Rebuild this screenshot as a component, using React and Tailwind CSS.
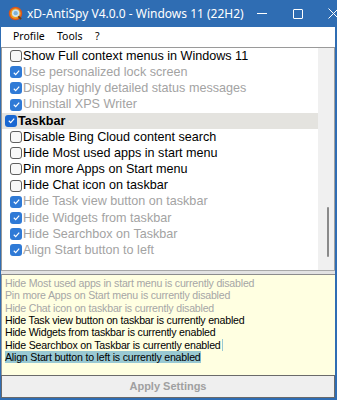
import React from "react";

const rows = [
  { t: "Show Full context menus in Windows 11", c: false, d: false },
  { t: "Use personalized lock screen", c: true, d: true },
  { t: "Display highly detailed status messages", c: true, d: true },
  { t: "Uninstall XPS Writer", c: true, d: true },
  { t: "Taskbar", c: true, d: false, h: true },
  { t: "Disable Bing Cloud content search", c: false, d: false },
  { t: "Hide Most used apps in start menu", c: false, d: false },
  { t: "Pin more Apps on Start menu", c: false, d: false },
  { t: "Hide Chat icon on taskbar", c: false, d: false },
  { t: "Hide Task view button on taskbar", c: true, d: true },
  { t: "Hide Widgets from taskbar", c: true, d: true },
  { t: "Hide Searchbox on Taskbar", c: true, d: true },
  { t: "Align Start button to left", c: true, d: true },
];

const logs = [
  { t: "Hide Most used apps in start menu is currently disabled", d: true },
  { t: "Pin more Apps on Start menu is currently disabled", d: true },
  { t: "Hide Chat icon on taskbar is currently disabled", d: true },
  { t: "Hide Task view button on taskbar is currently enabled", d: false },
  { t: "Hide Widgets from taskbar is currently enabled", d: false },
  { t: "Hide Searchbox on Taskbar is currently enabled", d: false, caret: true },
  { t: "Align Start button to left is currently enabled", d: false, sel: true },
];

function Box({ checked, dim }) {
  if (!checked)
    return (
      <span className="w-[12px] h-[12px] rounded-[3px] border border-[#5f5f5f] bg-[#f8f8f8] shrink-0" />
    );
  return (
    <span
      className={`w-[12px] h-[12px] rounded-[3px] shrink-0 flex items-center justify-center ${
        dim ? "bg-[#2f7ad6]" : "bg-[#1967d2]"
      }`}
    >
      <svg width="9" height="9" viewBox="0 0 10 10">
        <path d="M2 5.3 L4.1 7.3 L8 2.8" fill="none" stroke="white" strokeWidth="1.3" />
      </svg>
    </span>
  );
}

function Logo() {
  return (
    <svg width="15" height="15" viewBox="0 0 16 16">
      <circle cx="8" cy="8" r="7.2" fill="#d9561e" />
      <circle cx="8" cy="8" r="5.6" fill="#f0a020" />
      <circle cx="8.2" cy="7.6" r="4" fill="#cfe6f2" />
      <circle cx="8.2" cy="7.6" r="2.3" fill="#7fb2d6" />
      <path d="M11 11 L14 14" stroke="#6b3a1a" strokeWidth="2" />
    </svg>
  );
}

export default function App() {
  return (
    <div
      className="w-[337px] h-[400px] bg-[#2f6db3] flex flex-col pl-px pr-[2px] pb-[2px] overflow-hidden"
      style={{ fontFamily: '"Liberation Sans", Arial, sans-serif' }}
    >
      {/* title bar */}
      <div className="h-[27px] flex items-center text-white shrink-0">
        <div className="pl-[7px] pr-[4px] flex items-center">
          <Logo />
        </div>
        <div
          className="text-[12px] flex-1 whitespace-nowrap"
          style={{ fontFamily: '"Noto Sans", sans-serif' }}
        >
          xD-AntiSpy V4.0.0 - Windows 11 (22H2)
        </div>
        <div className="flex items-center">
          <div className="w-[36px] flex justify-center">
            <div className="w-[10px] h-px bg-white" />
          </div>
          <div className="w-[36px] flex justify-center">
            <div className="w-[10px] h-[10px] border border-white rounded-[1px]" />
          </div>
          <div className="w-[36px] flex justify-center">
            <svg width="11" height="11" viewBox="0 0 11 11">
              <path d="M0.5 0.5 L10.5 10.5 M10.5 0.5 L0.5 10.5" stroke="white" strokeWidth="1" />
            </svg>
          </div>
        </div>
      </div>

      {/* menu bar */}
      <div
        className="h-[20px] bg-white flex items-center text-[10.5px] text-black shrink-0 pl-[12px]"
        style={{ fontFamily: '"Noto Sans", sans-serif' }}
      >
        <span className="w-[44px]">Profile</span>
        <span className="w-[38px]">Tools</span>
        <span>?</span>
      </div>

      {/* list */}
      <div className="h-[224px] bg-white border-t border-l border-[#9a9a9a] flex shrink-0 border-b border-b-[#a8a8a8]">
        <div className="flex-1 flex flex-col overflow-hidden">
          {rows.map((r, i) => (
            <div
              key={i}
              className={`h-[16.2px] flex items-center whitespace-nowrap text-[12.6px] leading-none ${
                r.h ? "bg-[#e4e3df] pl-[3px] gap-[1px] font-bold text-black" : "pl-[8px] gap-[1px]"
              } ${r.d ? "text-[#a3a3a3]" : "text-black"}`}
            >
              <Box checked={r.c} dim={r.d} />
              <span>{r.t}</span>
            </div>
          ))}
        </div>
        <div className="w-[16px] bg-[#f0f0f0] flex flex-col items-center relative">
          <div className="absolute left-[9px] top-[159px] w-[2px] h-[50px] rounded-full bg-[#8a8a8a]" />
        </div>
        <div className="w-px bg-[#a0a0a0]" />
      </div>

      {/* separator */}
      <div className="h-[3px] bg-[#e2e2e2] shrink-0" />

      {/* log */}
      <div className="flex-1 bg-[#ffffe1] border-t border-[#8c8c8c] border-l border-l-[#9a9a9a] pt-[2px] pl-[3px] text-[10.6px] tracking-[-0.2px] leading-[12.33px]">
        {logs.map((l, i) => (
          <div key={i} className="flex whitespace-nowrap">
            <span
              className={`${l.d ? "text-[#a6a6a6]" : "text-black"} ${
                l.sel ? "bg-[#99c9d3]" : ""
              }`}
            >
              {l.t}
            </span>
            {l.caret && <span className="w-px bg-[#99c9d3] ml-[1px]" />}
          </div>
        ))}
      </div>

      {/* button */}
      <div className="h-[23px] bg-[#efefef] border border-[#6a6a6a] flex items-center justify-center shrink-0">
        <span className="text-[11px] font-bold text-[#a0a0a0]">Apply Settings</span>
      </div>
    </div>
  );
}
